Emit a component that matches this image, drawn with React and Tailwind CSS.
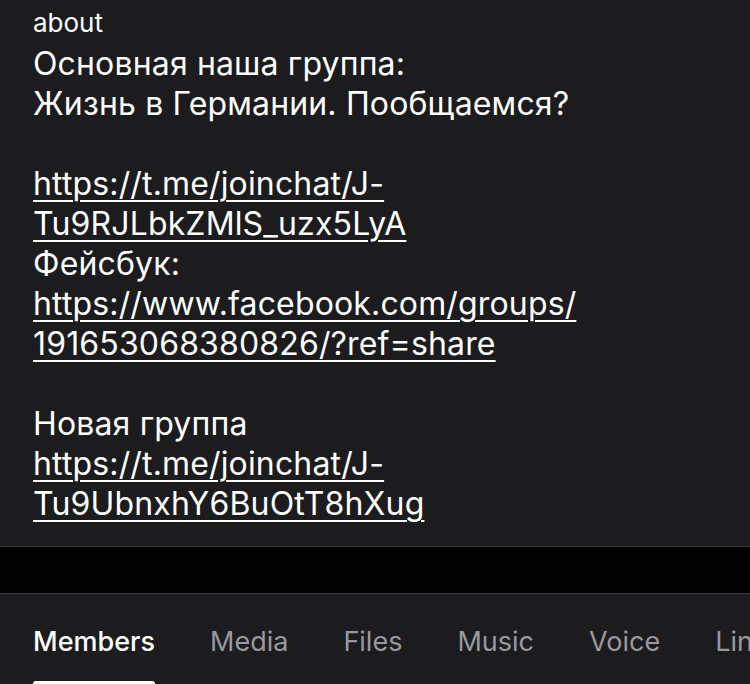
import React from "react";

const font = { fontFamily: "Inter, 'Noto Sans', sans-serif" };

function L({ children }) {
  return <span className="underline decoration-[1.5px] underline-offset-[5px]">{children}</span>;
}

export default function App() {
  const tabs = ["Members", "Media", "Files", "Music", "Voice", "Links"];
  return (
    <div className="w-[750px] h-[684px] overflow-hidden bg-[#1c1c1e] text-white" style={font}>
      <div className="px-[33px] pt-[2px] h-[546px]">
        <div className="text-[26px] leading-[42px] text-white">about</div>
        <div className="text-[32px] leading-[40px] tracking-[0.15px] text-white">
          <div>Основная наша группа:</div>
          <div>Жизнь в Германии. Пообщаемся?</div>
          <div>&nbsp;</div>
          <div><L>https://t.me/joinchat/J-</L></div>
          <div><L>Tu9RJLbkZMlS_uzx5LyA</L></div>
          <div>Фейсбук:</div>
          <div><L>https://www.facebook.com/groups/</L></div>
          <div><L>191653068380826/?ref=share</L></div>
          <div>&nbsp;</div>
          <div>Новая группа</div>
          <div><L>https://t.me/joinchat/J-</L></div>
          <div><L>Tu9UbnxhY6BuOtT8hXug</L></div>
        </div>
      </div>
      <div className="h-px bg-[#3a3a3c]" />
      <div className="h-[46px] bg-black" />
      <div className="h-px bg-[#3a3a3c]" />
      <div className="relative h-[90px] overflow-hidden">
        <div className="flex gap-[55px] pl-[33px] pt-[30px] whitespace-nowrap text-[27px] leading-[36px]">
          {tabs.map((t, i) => (
            <div key={t} className={i === 0 ? "text-white font-medium" : "text-[#98989e]"}>{t}</div>
          ))}
        </div>
        <div className="absolute left-[33px] top-[87px] w-[122px] h-[6px] rounded-[3px] bg-white" />
      </div>
    </div>
  );
}
